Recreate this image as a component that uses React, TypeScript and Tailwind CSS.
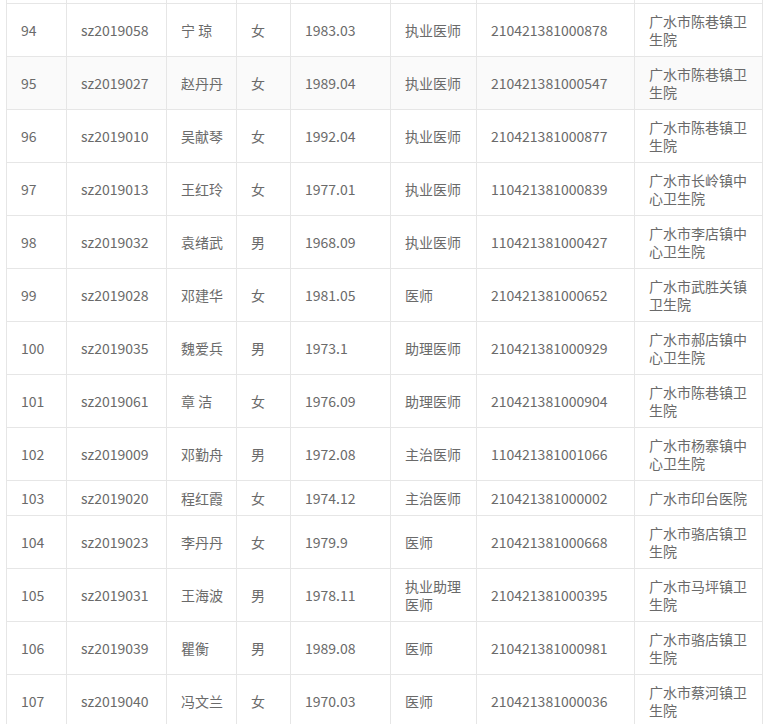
const rows: [string, string, string, string, string, string, string, string][] = [
  ["94", "sz2019058", "宁 琼", "女", "1983.03", "执业医师", "210421381000878", "广水市陈巷镇卫生院"],
  ["95", "sz2019027", "赵丹丹", "女", "1989.04", "执业医师", "210421381000547", "广水市陈巷镇卫生院"],
  ["96", "sz2019010", "吴献琴", "女", "1992.04", "执业医师", "210421381000877", "广水市陈巷镇卫生院"],
  ["97", "sz2019013", "王红玲", "女", "1977.01", "执业医师", "110421381000839", "广水市长岭镇中心卫生院"],
  ["98", "sz2019032", "袁绪武", "男", "1968.09", "执业医师", "110421381000427", "广水市李店镇中心卫生院"],
  ["99", "sz2019028", "邓建华", "女", "1981.05", "医师", "210421381000652", "广水市武胜关镇卫生院"],
  ["100", "sz2019035", "魏爱兵", "男", "1973.1", "助理医师", "210421381000929", "广水市郝店镇中心卫生院"],
  ["101", "sz2019061", "章 洁", "女", "1976.09", "助理医师", "210421381000904", "广水市陈巷镇卫生院"],
  ["102", "sz2019009", "邓勤舟", "男", "1972.08", "主治医师", "110421381001066", "广水市杨寨镇中心卫生院"],
  ["103", "sz2019020", "程红霞", "女", "1974.12", "主治医师", "210421381000002", "广水市印台医院"],
  ["104", "sz2019023", "李丹丹", "女", "1979.9", "医师", "210421381000668", "广水市骆店镇卫生院"],
  ["105", "sz2019031", "王海波", "男", "1978.11", "执业助理医师", "210421381000395", "广水市马坪镇卫生院"],
  ["106", "sz2019039", "瞿衡", "男", "1989.08", "医师", "210421381000981", "广水市骆店镇卫生院"],
  ["107", "sz2019040", "冯文兰", "女", "1970.03", "医师", "210421381000036", "广水市蔡河镇卫生院"],
];

const widths = ["w-[60px]", "w-[100px]", "w-[70px]", "w-[54px]", "w-[100px]", "w-[86px]", "w-[158px]", "w-[128px]"];

export default function App() {
  return (
    <div className="h-[724px] w-[769px] overflow-hidden bg-white pl-[6px] font-['Noto_Sans_CJK_SC',sans-serif] text-[14px] text-[#6a6a6a]">
      <table className="w-[756px] table-fixed border-collapse">
        <colgroup>
          {widths.map((w, i) => (
            <col key={i} className={w} />
          ))}
        </colgroup>
        <tbody>
          <tr>
            {widths.map((_, i) => (
              <td key={i} className="h-[3px] border-x border-[#e6e6e6] p-0" />
            ))}
          </tr>
          {rows.map((r) => (
            <tr key={r[0]} className={r[0] === "95" ? "bg-[#fafafa]" : ""}>
              {r.map((c, i) => (
                <td
                  key={i}
                  className="border border-[#e6e6e6] py-2 pl-[14px] pr-[8px] text-left align-middle leading-[18px] whitespace-pre-wrap"
                >
                  {c}
                </td>
              ))}
            </tr>
          ))}
        </tbody>
      </table>
    </div>
  );
}
